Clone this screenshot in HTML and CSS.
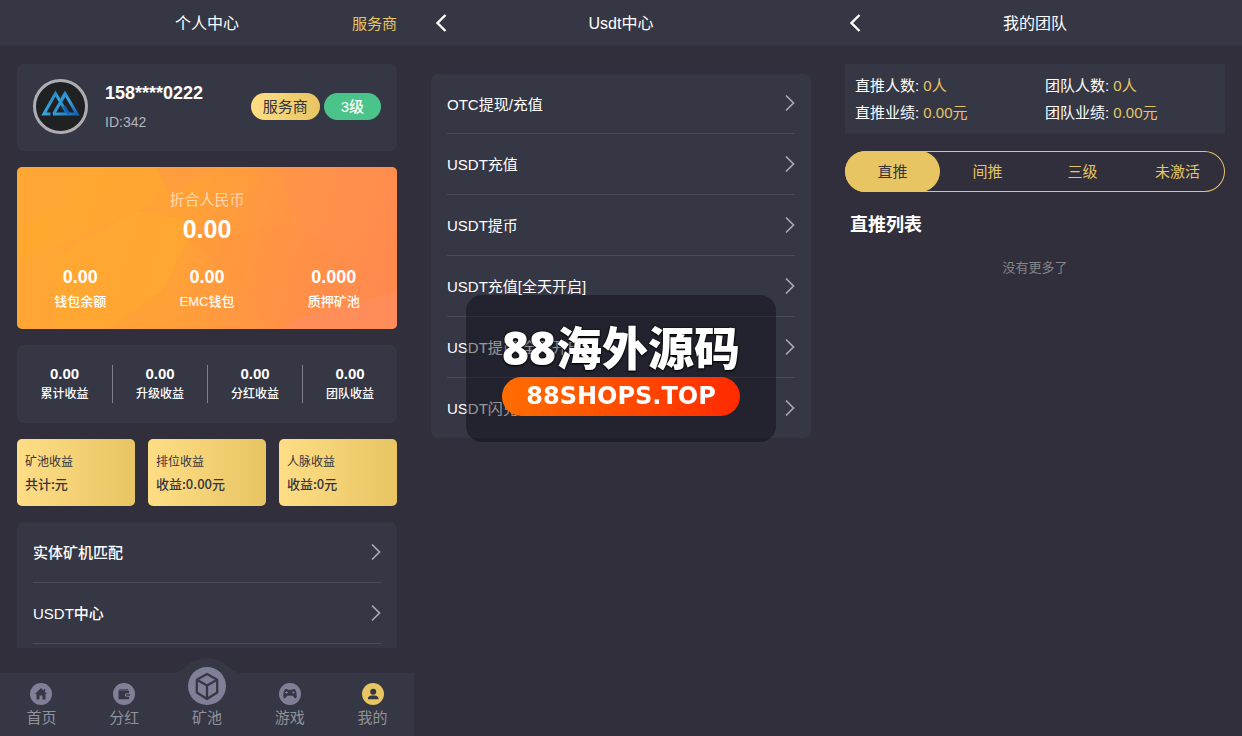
FILE: index.html
```html
<!DOCTYPE html>
<html lang="zh-CN">
<head>
<meta charset="utf-8">
<meta name="viewport" content="width=device-width, initial-scale=1">
<title>个人中心</title>
<link rel="stylesheet" href="styles.css">
</head>
<body>
<svg class="defs" aria-hidden="true">
  <symbol id="arrow" viewBox="0 0 10 18"><path d="M1 1.5 8.5 9 1 16.5" fill="none" stroke="currentColor" stroke-width="1.7"/></symbol>
  <symbol id="back" viewBox="0 0 12 18"><path d="M10.500 1 2.500 9l8 8" fill="none" stroke="currentColor" stroke-width="2.400"/></symbol>
</svg>
<div class="screens">
  <section class="screen">
    <header class="topbar">
      <span></span>
      <h1 class="topbar-title">个人中心</h1>
      <a class="topbar-link" href="#">服务商</a>
    </header>
    <main class="profile">
      <div class="user card">
        <svg class="avatar" viewBox="0 0 55 55" aria-hidden="true">
          <defs><linearGradient id="logo" x1="0" y1="0" x2="1" y2="1"><stop offset="0" stop-color="#1f74bd"/><stop offset=".5" stop-color="#38a6dc"/><stop offset="1" stop-color="#1464b8"/></linearGradient></defs>
          <circle cx="27.500" cy="27.500" r="26" fill="#202122" stroke="#adadb3" stroke-width="3"/>
          <g fill="none" stroke="url(#logo)" stroke-width="3">
            <path d="M17.500 35H10.800L22.500 14.500 34.500 35"/>
            <path d="M20 35h24L32 14.500l-3.500 6"/>
            <path d="M20.500 35 32 15.500" stroke="#2f97d3"/>
            <path d="M31 27l4.500 7.500" stroke="#1560b4"/>
          </g>
        </svg>
        <div class="user-info">
          <strong class="user-name">158****0222</strong>
          <span class="user-id">ID:342</span>
        </div>
        <div class="badges">
          <span class="badge badge-gold">服务商</span>
          <span class="badge badge-green">3级</span>
        </div>
      </div>

      <div class="wallet">
        <svg class="wallet-art" viewBox="0 0 380 162" preserveAspectRatio="none" aria-hidden="true">
          <path d="M60 0h80l15 28-55 25-100 42V62L50 35z" fill="#ffad28" opacity=".3"/>
          <path d="M38 90 120 44l60 10-35 70-55 38H38z" fill="#ffb02a" opacity=".35"/>
          <path d="M140 0h60l-48 28z" fill="#ff9650" opacity=".3"/>
          <path d="M170 70 275 60l55 20-20 60-50 22z" fill="#ff8f40" opacity=".15"/>
          <path d="M257 0h123v30L320 95 290 70z" fill="#ff9354" opacity=".3"/>
          <path d="m260 162 30-14 90-23v37z" fill="#ff8f60" opacity=".7"/>
        </svg>
        <div class="wallet-total">
          <span class="wallet-caption">折合人民币</span>
          <strong class="wallet-sum">0.00</strong>
        </div>
        <div class="wallet-row">
          <div class="wallet-cell"><strong>0.00</strong><span>钱包余额</span></div>
          <div class="wallet-cell"><strong>0.00</strong><span>EMC钱包</span></div>
          <div class="wallet-cell"><strong>0.000</strong><span>质押矿池</span></div>
        </div>
      </div>

      <div class="stats card">
        <div class="stat"><strong>0.00</strong><span>累计收益</span></div>
        <div class="stat"><strong>0.00</strong><span>升级收益</span></div>
        <div class="stat"><strong>0.00</strong><span>分红收益</span></div>
        <div class="stat"><strong>0.00</strong><span>团队收益</span></div>
      </div>

      <div class="incomes">
        <div class="income"><span>矿池收益</span><b>共计:元</b></div>
        <div class="income"><span>排位收益</span><b>收益:0.00元</b></div>
        <div class="income"><span>人脉收益</span><b>收益:0元</b></div>
      </div>

      <nav class="menu menu-strong card">
        <a class="menu-item" href="#">实体矿机匹配<svg class="arrow"><use href="#arrow"/></svg></a>
        <a class="menu-item" href="#">USDT中心<svg class="arrow"><use href="#arrow"/></svg></a>
        <a class="menu-item" href="#"></a>
      </nav>
    </main>
    <nav class="tabbar">
      <svg class="tabbar-hump" viewBox="0 0 64 15" aria-hidden="true"><path d="M0 15Q6 13 12 8Q20 0 32 0T52 8Q58 13 64 15z" fill="#363745"/></svg>
      <a class="tab" href="#">
        <svg class="tab-icon" viewBox="0 0 22 22" aria-hidden="true"><circle cx="11" cy="11" r="11" fill="#807f98"/><path d="M11 5 5 11h1.500v5.500h3V12.500h3v4h3V11H17l-1.800-1.800V6h-1.500v1.700z" fill="#363745"/></svg>
        首页</a>
      <a class="tab" href="#">
        <svg class="tab-icon" viewBox="0 0 22 22" aria-hidden="true"><circle cx="11" cy="11" r="11" fill="#807f98"/><path d="M6 6h9v1.200H6z" fill="#363745" opacity=".7"/><path d="M5.500 7.500H16v2.700h-2.500a1.700 1.700 0 0 0 0 3.600H16v2.500H5.500z" fill="#363745"/><path d="M13.800 11.200H17v1.600h-3.200a.8.8 0 0 1 0-1.600z" fill="#363745"/></svg>
        分红</a>
      <a class="tab" href="#">
        <svg class="tab-icon tab-icon-main" viewBox="0 0 38 38" aria-hidden="true"><circle cx="19" cy="19" r="19" fill="#807f98"/><path d="m19 7 10.200 5.800v12.700L19 32 8.800 25.500V12.800zM8.800 12.800 19 18.500l10.200-5.700M19 18.500V32" fill="none" stroke="#363745" stroke-width="2.300" stroke-linejoin="round"/></svg>
        矿池</a>
      <a class="tab" href="#">
        <svg class="tab-icon" viewBox="0 0 22 22" aria-hidden="true"><circle cx="11" cy="11" r="11" fill="#807f98"/><path d="M7 6c1 0 1.500.7 2.300.7h3.400C13.500 6.700 14 6 15 6c2 0 2.700 4 2.700 7.500 0 2.500-2 2.300-3 .5-.5-1-.8-1.300-1.500-1.300H8.800c-.7 0-1 .3-1.500 1.300-1 1.800-3 2-3-.5C4.300 10 5 6 7 6z" fill="#363745"/><path d="M6.200 9.500h2.600M7.500 8.200v2.600" stroke="#807f98"/><circle cx="14.500" cy="9.500" r="1.100" fill="#807f98"/></svg>
        游戏</a>
      <a class="tab" href="#">
        <svg class="tab-icon" viewBox="0 0 22 22" aria-hidden="true"><circle cx="11" cy="11" r="11" fill="#e7c563"/><circle cx="11.200" cy="8.700" r="3" fill="#363745"/><path d="M5.800 16.300c0-2.800 1.800-3.600 3.900-3.800h3c2.100.2 3.900 1 3.900 3.800z" fill="#363745"/></svg>
        我的</a>
    </nav>
  </section>

  <section class="screen">
    <header class="topbar">
      <button class="topbar-back" type="button" aria-label="返回"><svg><use href="#back"/></svg></button>
      <h1 class="topbar-title">Usdt中心</h1>
    </header>
    <main class="center">
      <nav class="menu menu-center card">
        <a class="menu-item" href="#">OTC提现/充值<svg class="arrow"><use href="#arrow"/></svg></a>
        <a class="menu-item" href="#">USDT充值<svg class="arrow"><use href="#arrow"/></svg></a>
        <a class="menu-item" href="#">USDT提币<svg class="arrow"><use href="#arrow"/></svg></a>
        <a class="menu-item" href="#">USDT充值[全天开启]<svg class="arrow"><use href="#arrow"/></svg></a>
        <a class="menu-item" href="#">USDT提币[全天开启]<svg class="arrow"><use href="#arrow"/></svg></a>
        <a class="menu-item" href="#">USDT闪兑<svg class="arrow"><use href="#arrow"/></svg></a>
      </nav>
    </main>
  </section>

  <section class="screen">
    <header class="topbar">
      <button class="topbar-back" type="button" aria-label="返回"><svg><use href="#back"/></svg></button>
      <h1 class="topbar-title">我的团队</h1>
    </header>
    <main class="team">
      <div class="team-stats">
        <div>直推人数: <span class="gold">0人</span></div>
        <div>团队人数: <span class="gold">0人</span></div>
        <div>直推业绩: <span class="gold">0.00元</span></div>
        <div>团队业绩: <span class="gold">0.00元</span></div>
      </div>
      <div class="segments">
        <button class="segment segment-on" type="button">直推</button>
        <button class="segment" type="button">间推</button>
        <button class="segment" type="button">三级</button>
        <button class="segment" type="button">未激活</button>
      </div>
      <h2 class="team-heading">直推列表</h2>
      <p class="team-end">没有更多了</p>
    </main>
  </section>
</div>
<div class="overlay">
  <div class="stamp">
    <div class="stamp-name">88海外源码</div>
    <div class="stamp-site">88SHOPS.TOP</div>
  </div>
</div>
</body>
</html>
```
FILE: styles.css
```css
* { box-sizing: border-box; }

body {
  margin: 0;
  background: #302f3b;
  color: #fff;
  font-family: "Liberation Sans", "Noto Sans CJK SC", sans-serif;
  font-size: 15px;
}

a { color: inherit; text-decoration: none; }

button {
  border: 0;
  background: none;
  color: inherit;
  font: inherit;
  padding: 0;
}

.defs { position: absolute; width: 0; height: 0; }

.screens {
  display: grid;
  grid-template-columns: repeat(3, 1fr);
  height: 100vh;
}

.screen {
  display: flex;
  flex-direction: column;
  min-width: 0;
  min-height: 0;
}

.card { background: #363745; border-radius: 7px; }
.gold { color: #e7c563; }

.topbar {
  display: grid;
  grid-template-columns: 1fr auto 1fr;
  align-items: center;
  flex: none;
  height: 46px;
  padding: 0 17px 2px 17px;
  background: #363745;
}
.topbar-title { margin: 0; font-size: 16px; font-weight: 400; }
.topbar-link { justify-self: end; color: #e7c563; }
.topbar-back { display: flex; justify-self: start; padding: 2px 4px 0; }
.topbar-back svg { width: 12px; height: 18px; }

.profile {
  display: flex;
  flex: 1;
  flex-direction: column;
  gap: 16px;
  min-height: 0;
  padding: 18px 17px 0;
  overflow: hidden;
}
.profile > * { flex: none; }

.user { display: flex; align-items: center; padding: 15px 16px 17px; }
.avatar { width: 55px; height: 55px; margin-right: 17px; }
.user-info { display: flex; flex: 1; flex-direction: column; gap: 10px; padding-top: 1px; }
.user-name { font-size: 18px; line-height: 20px; }
.user-id { color: #b4b4ba; font-size: 14px; line-height: 18px; }
.badges { display: flex; gap: 4px; }
.badge { border-radius: 14px; line-height: 27px; }
.badge-gold { padding: 0 12px; background: linear-gradient(90deg, #ffdd85, #e7c563); color: #33333d; }
.badge-green { padding: 0 17px; background: #4bc48b; font-weight: 500; }

.wallet {
  position: relative;
  padding: 20px 0 16px;
  border-radius: 5px;
  background: linear-gradient(105deg, #ffa734 5%, #ffa038 45%, #ff9148 75%, #ff8850);
  overflow: hidden;
  text-align: center;
}
.wallet-art { position: absolute; inset: 0; width: 100%; height: 100%; }
.wallet-total { position: relative; display: flex; flex-direction: column; }
.wallet-caption { color: rgba(255, 255, 255, .6); line-height: 25px; }
.wallet-sum { font-size: 25px; line-height: 35px; }
.wallet-row { position: relative; display: grid; grid-template-columns: repeat(3, 1fr); padding-top: 17px; }
.wallet-cell { display: flex; flex-direction: column; font-size: 13px; font-weight: 500; line-height: 23px; }
.wallet-cell strong { font-size: 18px; line-height: 26px; }

.stats { display: grid; grid-template-columns: repeat(4, 1fr); padding: 20px 0; }
.stat {
  display: flex;
  flex-direction: column;
  gap: 2px;
  font-size: 12px;
  font-weight: 500;
  line-height: 18px;
  text-align: center;
}
.stat + .stat { border-left: 1px solid #7f8089; }
.stat strong { font-size: 15px; }

.incomes { display: grid; grid-template-columns: repeat(3, 1fr); gap: 13px; }
.income {
  display: flex;
  flex-direction: column;
  padding: 11px 8px;
  border-radius: 5px;
  background: linear-gradient(90deg, #ffdd85, #e7c563);
  color: #33333d;
  font-family: "Noto Sans CJK SC", sans-serif;
  font-size: 12px;
  line-height: 22px;
}
.income b { font-size: 13px; font-weight: 500; line-height: 23px; }

.menu { padding: 0 16px; }
.menu-strong { font-weight: 500; }
.menu-item {
  display: flex;
  align-items: center;
  justify-content: space-between;
  height: 61px;
  padding-bottom: 1px;
  border-bottom: 1px solid #4a4b58;
}
.menu-item:last-child { height: 60px; border-bottom: 0; }
.menu-center .menu-item:first-child { height: 60px; }
.arrow { width: 10px; height: 18px; color: #a9a9b0; }

.tabbar {
  position: relative;
  display: flex;
  flex: none;
  align-items: flex-end;
  height: 63px;
  margin-top: 25px;
  padding-bottom: 7px;
  background: #363745;
  color: #92929a;
}
.tabbar-hump { position: absolute; bottom: 100%; left: 50%; width: 64px; height: 15px; margin-left: -32px; }
.tab { position: relative; display: flex; flex: 1; flex-direction: column; align-items: center; gap: 2px; line-height: 22px; }
.tab-icon { width: 22px; height: 22px; }
.tab-icon-main { width: 38px; height: 38px; }

.center { padding: 28px 17px; }

.team { padding: 18px 17px; }
.team-stats {
  display: grid;
  grid-template-columns: 1fr 1fr;
  padding: 8px 0;
  background: #363745;
  line-height: 27px;
}
.team-stats div { padding-left: 10px; }
.segments {
  display: grid;
  grid-template-columns: repeat(4, 1fr);
  margin-top: 17px;
  border-radius: 21px;
  box-shadow: inset 0 0 0 1px #e7c563;
  color: #e7c563;
}
.segment { height: 41px; border-radius: 21px; padding-bottom: 2px; }
.segment-on { background: #e7c563; color: #33333d; }
.team-heading { margin: 20px 5px 0; font-size: 18px; line-height: 26px; }
.team-end { margin: 20px 0 0; color: #85858b; font-size: 13px; line-height: 20px; text-align: center; }

.overlay {
  position: fixed;
  inset: 0;
  display: grid;
  place-items: center;
  pointer-events: none;
}
.stamp {
  padding: 26px 36px;
  border-radius: 16px;
  background: rgba(8, 8, 14, .42);
  text-align: center;
}
.stamp-name {
  padding-bottom: 4px;
  font: 800 46px/52px "Open Sans", "Noto Sans CJK SC", sans-serif;
  text-shadow: 0 0 2px #000, 0 1px 2px #000;
}
.stamp-site {
  border-radius: 20px;
  background: linear-gradient(90deg, #ff6e00, #ff2a00);
  font: 700 24px/39px "DejaVu Sans", sans-serif;
}
```
